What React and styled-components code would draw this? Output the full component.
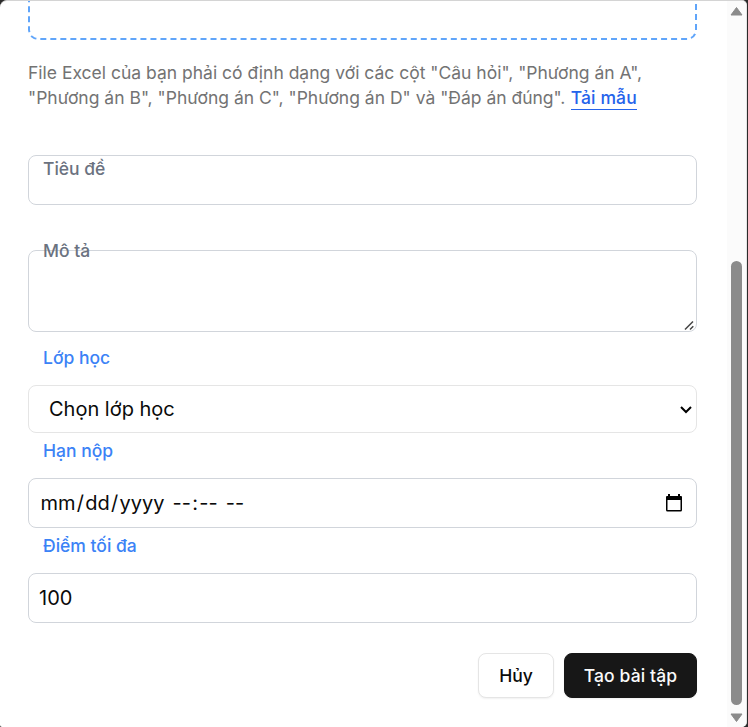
import React from "react";
import styled, { createGlobalStyle } from "styled-components";

const GlobalStyle = createGlobalStyle`
  *, *::before, *::after { box-sizing: border-box; }
  body { margin: 0; background: #2b2b2b; overflow: hidden; font-family: Inter, "Noto Sans", sans-serif; }
`;

const Dialog = styled.main`
  display: flex;
  width: 747px;
  height: 727px;
  overflow: hidden;
  background: #fff;
  border-top: 1px solid #d4d4d4;
  border-right: 1px solid #e5e5e5;
  border-radius: 7px 5px 5px 2px;
`;

const Content = styled.form`
  flex: 1;
  min-width: 0;
  padding: 0 30px 0 28px;
  display: flex;
  flex-direction: column;
`;

const DropZone = styled.div`
  flex: none;
  height: 164px;
  margin-top: -125px;
  border: 2px dashed #60a5fa;
  border-radius: 10px;
`;

const Hint = styled.p`
  margin: 20px 0 0;
  font-size: 17.5px;
  line-height: 25px;
  color: #737373;
  white-space: nowrap;
`;

const TemplateLink = styled.a`
  margin-left: 0.5px;
  padding-bottom: 1px;
  color: #2563eb;
  font-weight: 500;
  letter-spacing: 0.12px;
  text-decoration: none;
  border-bottom: 1px solid #2563eb;
`;

const Field = styled.div`
  position: relative;
  flex: none;
  margin-top: ${(p) => p.$gap}px;
`;

const Label = styled.label`
  display: block;
  height: 25px;
  padding-left: 15px;
  font-size: 17.5px;
  font-weight: 500;
  line-height: 25px;
  color: #3b82f6;
  margin-bottom: ${(p) => p.$space}px;
`;

const FloatingLabel = styled(Label)`
  position: absolute;
  left: 0;
  top: ${(p) => p.$top}px;
  margin: 0;
  color: #6b7280;
`;

const controlStyles = `
  display: flex;
  align-items: center;
  width: 100%;
  margin: 0;
  border: 1px solid #d1d5db;
  border-radius: 8px;
  background: #fff;
  color: #0a0a0a;
  font: 400 20px/30px Inter, "Noto Sans", sans-serif;
  outline: none;
`;

const Input = styled.input`
  ${controlStyles}
  height: 50px;
  padding: 0 10px;
`;

const TextArea = styled.textarea`
  ${controlStyles}
  display: block;
  height: 82px;
  padding: 10px;
  resize: none;
`;

const SelectBox = styled.div`
  ${controlStyles}
  height: 48px;
  padding: 0 4px 0 20px;
  justify-content: space-between;
  border-color: #e5e5e5;
`;

const SelectChevron = styled.svg`
  margin-top: 2px;
`;

const DateBox = styled.div`
  ${controlStyles}
  height: 50px;
  padding: 0 13px 0 10.25px;
  justify-content: space-between;
`;

const DateText = styled.span`
  white-space: pre;
`;

const DatePart = styled.span`
  padding: 0 1.25px;
`;

const ResizeGrip = styled.svg`
  position: absolute;
  right: 2px;
  bottom: 1px;
`;

const Actions = styled.footer`
  display: flex;
  justify-content: flex-end;
  gap: 10px;
  margin-top: 30px;
`;

const Button = styled.button`
  height: 45px;
  width: ${(p) => (p.$primary ? 133 : 76)}px;
  padding: 0;
  border: 1px solid ${(p) => (p.$primary ? "#171717" : "#e5e5e5")};
  border-radius: 8px;
  background: ${(p) => (p.$primary ? "#171717" : "#fff")};
  color: ${(p) => (p.$primary ? "#fafafa" : "#0a0a0a")};
  font: 500 17.5px/25px Inter, "Noto Sans", sans-serif;
  letter-spacing: ${(p) => (p.$primary ? 0.12 : 0)}px;
  box-shadow: 0 1px 2px rgba(0, 0, 0, 0.06);
`;

const ScrollTrack = styled.aside`
  width: 19px;
  flex: none;
  display: flex;
  flex-direction: column;
  align-items: center;
  background: #fbfbfb;
`;

const ScrollArrow = styled.svg`
  display: block;
  flex: none;
  margin-top: ${(p) => p.$gap}px;
`;

const ScrollThumb = styled.div`
  flex: none;
  width: 11px;
  height: 444px;
  margin-top: 245px;
  border-radius: 6px;
  background: #8b8b8b;
`;

export default function App() {
  return (
    <>
      <GlobalStyle />
      <Dialog>
        <Content onSubmit={(e) => e.preventDefault()}>
          <DropZone />
          <Hint>
            File Excel của bạn phải có định dạng với các cột "Câu hỏi", "Phương án A",
            <br />
            "Phương án B", "Phương án C", "Phương án D" và "Đáp án đúng".{" "}
            <TemplateLink>Tải mẫu</TemplateLink>
          </Hint>
          <Field $gap={45}>
            <Input id="title" />
            <FloatingLabel htmlFor="title" $top={1}>Tiêu đề</FloatingLabel>
          </Field>
          <Field $gap={45}>
            <TextArea id="description" />
            <FloatingLabel htmlFor="description" $top={-12}>Mô tả</FloatingLabel>
            <ResizeGrip width="11" height="11" viewBox="0 0 11 11" stroke="#444" strokeWidth="1.5">
              <path d="M1 9.5 9 1.500M6 9.500 9.300 6.200" />
            </ResizeGrip>
          </Field>
          <Field $gap={13}>
            <Label $space={15}>Lớp học</Label>
            <SelectBox>
              Chọn lớp học
              <SelectChevron width="13" height="10" viewBox="0 0 13 10" fill="none" stroke="#000" strokeWidth="2">
                <path d="m2 2 5 5 5-5" />
              </SelectChevron>
            </SelectBox>
          </Field>
          <Field $gap={5}>
            <Label $space={15}>Hạn nộp</Label>
            <DateBox>
              <DateText>
                <DatePart>mm</DatePart>/<DatePart>dd</DatePart>/<DatePart>yyyy</DatePart>{" "}
                <DatePart>--</DatePart>:<DatePart>--</DatePart>{" "}
                <DatePart>--</DatePart>
              </DateText>
              <svg width="18" height="20" viewBox="0 0 18 20">
                <path
                  fill="#000"
                  fillRule="evenodd"
                  d="M3 1h2v2h8V1h2v2h1a1 1 0 0 1 1 1v13a1.500 1.500 0 0 1-1.500 1.500h-13A1.500 1.500 0 0 1 1 17V4a1 1 0 0 1 1-1h1zM2.500 7v10h13V7z"
                />
              </svg>
            </DateBox>
          </Field>
          <Field $gap={5}>
            <Label htmlFor="score" $space={15}>Điểm tối đa</Label>
            <Input id="score" defaultValue="100" />
          </Field>
          <Actions>
            <Button type="button">Hủy</Button>
            <Button type="submit" $primary>Tạo bài tập</Button>
          </Actions>
        </Content>
        <ScrollTrack>
          <ScrollArrow $gap={5} width="13" height="10" viewBox="0 0 13 10">
            <path fill="#8b8b8b" stroke="#8b8b8b" strokeLinejoin="round" d="M6.500 1.500 12 9H1z" />
          </ScrollArrow>
          <ScrollThumb />
          <ScrollArrow $gap={8} width="13" height="10" viewBox="0 0 13 10">
            <path fill="#8b8b8b" stroke="#8b8b8b" strokeLinejoin="round" d="M6.500 8.500 12 1H1z" />
          </ScrollArrow>
        </ScrollTrack>
      </Dialog>
    </>
  );
}
